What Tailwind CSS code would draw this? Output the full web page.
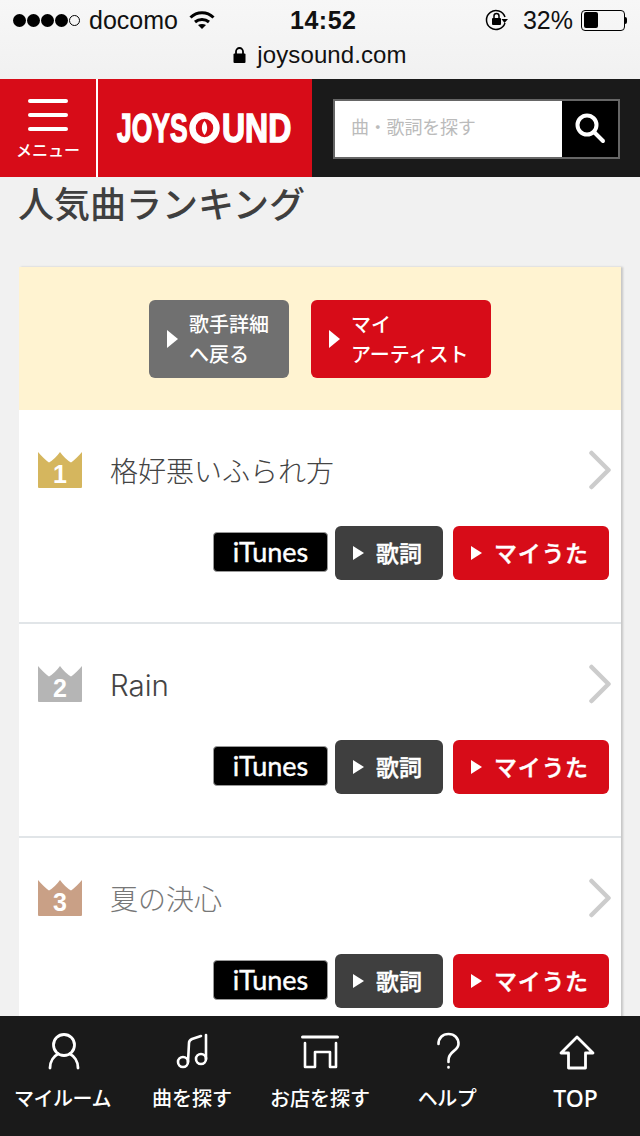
<!DOCTYPE html>
<html lang="ja">
<head>
<meta charset="utf-8">
<script src="https://cdn.jsdelivr.net/npm/@tailwindcss/browser@4"></script>
</head>
<body class="m-0">
<div class="w-[640px] h-[1136px] flex flex-col overflow-hidden bg-[#f1f1f1] font-['Noto_Sans_CJK_JP','Noto_Sans',sans-serif]">

  <!-- Browser status bar -->
  <div class="h-[79px] shrink-0 flex flex-col bg-gradient-to-b from-[#f7f7f7] to-[#f1f1f1] text-[#111] font-['Liberation_Sans',sans-serif]">
    <div class="h-[40px] flex items-center relative px-[13px]">
      <div class="flex items-center gap-[1px]">
        <span class="w-[13px] h-[13px] rounded-full bg-black"></span>
        <span class="w-[13px] h-[13px] rounded-full bg-black"></span>
        <span class="w-[13px] h-[13px] rounded-full bg-black"></span>
        <span class="w-[13px] h-[13px] rounded-full bg-black"></span>
        <span class="w-[11px] h-[11px] rounded-full border border-black"></span>
      </div>
      <span class="ml-[9px] text-[25px] leading-none">docomo</span>
      <svg class="ml-[11px]" width="26" height="20" viewBox="0 0 26 20" fill="none" stroke="#000" stroke-width="3"><path d="M1.500 7.500C8 1 18 1 24.500 7.500"/><path d="M6 12c4-3.500 10-3.500 14 0"/><path d="M13 19l-4-4c2.500-1.500 5.500-1.500 8 0z" fill="#000" stroke="none"/></svg>
      <span class="absolute left-[290px] top-[8px] text-[25px] leading-none font-bold tracking-[0.5px]">14:52</span>
      <div class="ml-auto flex items-center">
        <svg width="24" height="24" viewBox="0 0 24 24" fill="none" stroke="#000" stroke-width="1.500"><path d="M20 15a9.500 9.500 0 1 1 0-6"/><path d="M23 11l-3.500 4-3-4z" fill="#000" stroke="none"/><rect x="7" y="10" width="9" height="7" rx="1" fill="#000" stroke="none"/><path d="M9 10V8a2.500 2.500 0 0 1 5 0v2"/></svg>
        <span class="ml-[14px] text-[25px] leading-none">32%</span>
        <div class="ml-[8px] w-[44px] h-[21px] border border-black rounded-[4px] p-[1.500px]">
          <div class="w-[14px] h-full bg-black rounded-[2px]"></div>
        </div>
        <span class="w-[2px] h-[7px] bg-black rounded-r-sm"></span>
      </div>
    </div>
    <div class="flex-1 flex items-start justify-center gap-[11px] pt-[1px]">
      <svg class="mt-[6px]" width="13" height="16" viewBox="0 0 13 16"><path d="M3 7V4.500a3.500 3.500 0 0 1 7 0V7" fill="none" stroke="#000" stroke-width="1.800"/><rect x="0.500" y="6.500" width="12" height="9.500" rx="1" fill="#000"/></svg>
      <span class="text-[24px] leading-[27px] tracking-[0.1px]">joysound.com</span>
    </div>
  </div>

  <!-- Header -->
  <header class="h-[98px] shrink-0 flex bg-[#1a1a1a]">
    <div class="w-[96px] bg-[#d70c18] flex flex-col items-center pt-[20px] text-white">
      <span class="w-[40px] h-[4px] rounded-full bg-white"></span>
      <span class="w-[40px] h-[4px] rounded-full bg-white mt-[10px]"></span>
      <span class="w-[40px] h-[4px] rounded-full bg-white mt-[10px]"></span>
      <span class="mt-[6px] text-[16px] leading-[24px] font-medium">メニュー</span>
    </div>
    <div class="w-[2px] bg-white"></div>
    <div class="w-[214px] bg-[#d70c18] flex items-center pl-[19px] text-white font-['Liberation_Sans',sans-serif] text-[41px] leading-none font-bold whitespace-nowrap [-webkit-text-stroke:1.500px_#fff]">
      <span class="block w-[71px] origin-left scale-x-[0.645]">JOYS</span>
      <svg class="shrink-0 ml-[1px]" width="31" height="32" viewBox="0 0 31 32"><ellipse cx="15.500" cy="16" rx="12" ry="12.500" fill="none" stroke="#fff" stroke-width="6.500"/><path d="M15.500 9c3.500 3.500 3.500 10.500 0 14c-3.500-3.500-3.500-10.500 0-14z" fill="#fff"/></svg>
      <span class="block w-[71px] ml-[2px] origin-left scale-x-[0.78]">UND</span>
    </div>
    <div class="flex-1 flex items-center pl-[21px]">
      <div class="w-[287px] h-[60px] mt-[2px] border-2 border-[#666] flex">
        <div class="flex-1 bg-white flex items-center pl-[16px] pb-[5px] text-[18px] tracking-[-0.2px] text-[#bbb]">曲・歌詞を探す</div>
        <div class="w-[56px] bg-black flex items-center justify-center pb-[2px]">
          <svg width="32" height="32" viewBox="0 0 32 32" fill="none" stroke="#fff" stroke-width="4" stroke-linecap="round"><circle cx="13" cy="13" r="9.500"/><path d="M20 20l9 9"/></svg>
        </div>
      </div>
    </div>
  </header>

  <!-- Main -->
  <main class="flex-1 min-h-0 overflow-hidden">
    <h1 class="pl-[18px] -mt-[2px] text-[36px] leading-[54px] font-medium text-[#3f3f3f]">人気曲ランキング</h1>
    <div class="mt-[38px] ml-[19px] w-[602px] bg-white shadow-[2px_0_2px_rgba(0,0,0,0.18)]">
      <div class="h-[143px] bg-[#fff3d1] flex items-start justify-center gap-[22px] pt-[33px]">
        <a class="w-[140px] h-[78px] rounded-[6px] bg-[#707070] flex items-center text-white text-[20px] leading-[30px] font-medium">
          <span class="ml-[18px] mr-[11px] border-y-[9px] border-y-transparent border-l-[11px] border-l-white"></span>
          <span>歌手詳細<br>へ戻る</span>
        </a>
        <a class="w-[180px] h-[78px] rounded-[6px] bg-[#d70c18] flex items-center text-white text-[20px] leading-[30px] font-medium">
          <span class="ml-[18px] mr-[11px] border-y-[9px] border-y-transparent border-l-[11px] border-l-white"></span>
          <span>マイ<br>アーティスト</span>
        </a>
      </div>

      <!-- Row 1 -->
      <section class="h-[214px] border-b-2 border-[#e1e5e8] pt-[41px]">
        <div class="flex items-center h-[38px] pl-[19px] pr-[10px]">
          <div class="relative w-[44px] h-[36px]">
            <svg width="44" height="36" viewBox="0 0 44 36"><path d="M0 0Q6 7 11 10.500 17 7 22 0 27 7 33 10.500 38 7 44 0V35a1 1 0 0 1-1 1H1a1 1 0 0 1-1-1z" fill="#d5b65e"/></svg>
            <span class="absolute inset-x-0 top-[8px] text-center text-[25px] leading-[28px] font-bold text-white font-['Liberation_Sans',sans-serif]">1</span>
          </div>
          <span class="ml-[28px] -mt-[1px] text-[28px] leading-[38px] font-light text-[#444]">格好悪いふられ方</span>
          <svg class="ml-auto" width="22" height="40" viewBox="0 0 22 40" fill="none" stroke="#ccc" stroke-width="4.500" stroke-linecap="round" stroke-linejoin="round"><path d="M2.500 3L19.500 20 2.500 37"/></svg>
        </div>
        <div class="mt-[37px] flex items-center justify-end gap-[7px] pr-[12px]">
          <a class="w-[115px] h-[40px] mb-[2px] pb-[2px] rounded-[4px] bg-black border border-[#999] flex items-center justify-center text-white text-[27px] leading-none font-['Lato',sans-serif] [-webkit-text-stroke:0.4px_#fff]">iTunes</a>
          <a class="w-[108px] h-[54px] pb-[2px] rounded-[6px] bg-[#3f3f3f] flex items-center text-white text-[23px] font-medium pl-[18px] [-webkit-text-stroke:0.4px_#fff]">
            <span class="mr-[12px] mt-[2px] border-y-[7px] border-y-transparent border-l-[11px] border-l-white"></span>歌詞</a>
          <a class="ml-[3px] w-[156px] h-[54px] pb-[2px] rounded-[6px] bg-[#d70c18] flex items-center text-white text-[23px] font-medium pl-[18px] tracking-[0.7px] [-webkit-text-stroke:0.4px_#fff]">
            <span class="mr-[12px] mt-[2px] border-y-[7px] border-y-transparent border-l-[11px] border-l-white"></span>マイうた</a>
        </div>
      </section>

      <!-- Row 2 -->
      <section class="h-[214px] border-b-2 border-[#e1e5e8] pt-[41px]">
        <div class="flex items-center h-[38px] pl-[19px] pr-[10px]">
          <div class="relative w-[44px] h-[36px]">
            <svg width="44" height="36" viewBox="0 0 44 36"><path d="M0 0Q6 7 11 10.500 17 7 22 0 27 7 33 10.500 38 7 44 0V35a1 1 0 0 1-1 1H1a1 1 0 0 1-1-1z" fill="#b5b5b5"/></svg>
            <span class="absolute inset-x-0 top-[8px] text-center text-[25px] leading-[28px] font-bold text-white font-['Liberation_Sans',sans-serif]">2</span>
          </div>
          <span class="ml-[28px] mt-[2px] text-[29.500px] leading-[38px] font-light text-[#444] font-['Inter',sans-serif]">Rain</span>
          <svg class="ml-auto" width="22" height="40" viewBox="0 0 22 40" fill="none" stroke="#ccc" stroke-width="4.500" stroke-linecap="round" stroke-linejoin="round"><path d="M2.500 3L19.500 20 2.500 37"/></svg>
        </div>
        <div class="mt-[37px] flex items-center justify-end gap-[7px] pr-[12px]">
          <a class="w-[115px] h-[40px] mb-[2px] pb-[2px] rounded-[4px] bg-black border border-[#999] flex items-center justify-center text-white text-[27px] leading-none font-['Lato',sans-serif] [-webkit-text-stroke:0.4px_#fff]">iTunes</a>
          <a class="w-[108px] h-[54px] pb-[2px] rounded-[6px] bg-[#3f3f3f] flex items-center text-white text-[23px] font-medium pl-[18px] [-webkit-text-stroke:0.4px_#fff]">
            <span class="mr-[12px] mt-[2px] border-y-[7px] border-y-transparent border-l-[11px] border-l-white"></span>歌詞</a>
          <a class="ml-[3px] w-[156px] h-[54px] pb-[2px] rounded-[6px] bg-[#d70c18] flex items-center text-white text-[23px] font-medium pl-[18px] tracking-[0.7px] [-webkit-text-stroke:0.4px_#fff]">
            <span class="mr-[12px] mt-[2px] border-y-[7px] border-y-transparent border-l-[11px] border-l-white"></span>マイうた</a>
        </div>
      </section>

      <!-- Row 3 -->
      <section class="h-[214px] border-b-2 border-[#e1e5e8] pt-[41px]">
        <div class="flex items-center h-[38px] pl-[19px] pr-[10px]">
          <div class="relative w-[44px] h-[36px]">
            <svg width="44" height="36" viewBox="0 0 44 36"><path d="M0 0Q6 7 11 10.500 17 7 22 0 27 7 33 10.500 38 7 44 0V35a1 1 0 0 1-1 1H1a1 1 0 0 1-1-1z" fill="#c9a086"/></svg>
            <span class="absolute inset-x-0 top-[8px] text-center text-[25px] leading-[28px] font-bold text-white font-['Liberation_Sans',sans-serif]">3</span>
          </div>
          <span class="ml-[28px] -mt-[1px] text-[28px] leading-[38px] font-light text-[#777]">夏の決心</span>
          <svg class="ml-auto" width="22" height="40" viewBox="0 0 22 40" fill="none" stroke="#ccc" stroke-width="4.500" stroke-linecap="round" stroke-linejoin="round"><path d="M2.500 3L19.500 20 2.500 37"/></svg>
        </div>
        <div class="mt-[37px] flex items-center justify-end gap-[7px] pr-[12px]">
          <a class="w-[115px] h-[40px] mb-[2px] pb-[2px] rounded-[4px] bg-black border border-[#999] flex items-center justify-center text-white text-[27px] leading-none font-['Lato',sans-serif] [-webkit-text-stroke:0.4px_#fff]">iTunes</a>
          <a class="w-[108px] h-[54px] pb-[2px] rounded-[6px] bg-[#3f3f3f] flex items-center text-white text-[23px] font-medium pl-[18px] [-webkit-text-stroke:0.4px_#fff]">
            <span class="mr-[12px] mt-[2px] border-y-[7px] border-y-transparent border-l-[11px] border-l-white"></span>歌詞</a>
          <a class="ml-[3px] w-[156px] h-[54px] pb-[2px] rounded-[6px] bg-[#d70c18] flex items-center text-white text-[23px] font-medium pl-[18px] tracking-[0.7px] [-webkit-text-stroke:0.4px_#fff]">
            <span class="mr-[12px] mt-[2px] border-y-[7px] border-y-transparent border-l-[11px] border-l-white"></span>マイうた</a>
        </div>
      </section>
    </div>
  </main>

  <!-- Footer -->
  <footer class="h-[120px] shrink-0 bg-[#1a1a1a] grid grid-cols-5 text-white text-[20px] leading-[30px] font-medium text-center">
    <a class="flex flex-col items-center pt-[16px]">
      <svg width="40" height="40" viewBox="0 0 40 40" fill="none" stroke="#fff" stroke-width="2.800" stroke-linecap="round"><circle cx="20" cy="13" r="10.500"/><path d="M6 36c0-7 4-12 8-14M34 36c0-7-4-12-8-14"/></svg>
      <span class="mt-[11px] mr-[3px] whitespace-nowrap tracking-[-0.5px]">マイルーム</span>
    </a>
    <a class="flex flex-col items-center pt-[16px]">
      <svg width="40" height="40" viewBox="0 0 40 40" fill="none" stroke="#fff" stroke-width="2.600" stroke-linecap="round" stroke-linejoin="round"><circle cx="11" cy="30" r="5"/><circle cx="29" cy="27" r="5"/><path d="M16 30L17 11c0-2 1-3 3-4l9-3"/><path d="M34 27V3"/></svg>
      <span class="mt-[11px] whitespace-nowrap">曲を探す</span>
    </a>
    <a class="flex flex-col items-center pt-[16px]">
      <svg width="40" height="40" viewBox="0 0 40 40" fill="none" stroke="#fff" stroke-width="2.600" stroke-linecap="round" stroke-linejoin="round"><path d="M2.500 5h35" stroke-width="3"/><path d="M5 11v24h10V20h15v15h6V11"/></svg>
      <span class="mt-[11px] whitespace-nowrap">お店を探す</span>
    </a>
    <a class="flex flex-col items-center pt-[16px]">
      <svg width="40" height="40" viewBox="0 0 40 40" fill="none" stroke="#fff" stroke-width="2.600" stroke-linecap="round" stroke-linejoin="round"><path d="M10.500 12c0-6 4-10 10-10s10 4 10 10c0 7-10 7-10 16v2"/><path d="M20.500 35v.5"/></svg>
      <span class="mt-[11px] mr-[2px] whitespace-nowrap tracking-[-0.5px]">ヘルプ</span>
    </a>
    <a class="flex flex-col items-center pt-[16px]">
      <svg width="40" height="40" viewBox="0 0 40 40" fill="none" stroke="#fff" stroke-width="2.800" stroke-linejoin="round"><path d="M21 5L5 21h7.500v15h17V21H37z"/></svg>
      <span class="mt-[11px] mr-[1px] whitespace-nowrap font-['Noto_Sans',sans-serif] text-[23px] font-medium">TOP</span>
    </a>
  </footer>
</div>
</body>
</html>
